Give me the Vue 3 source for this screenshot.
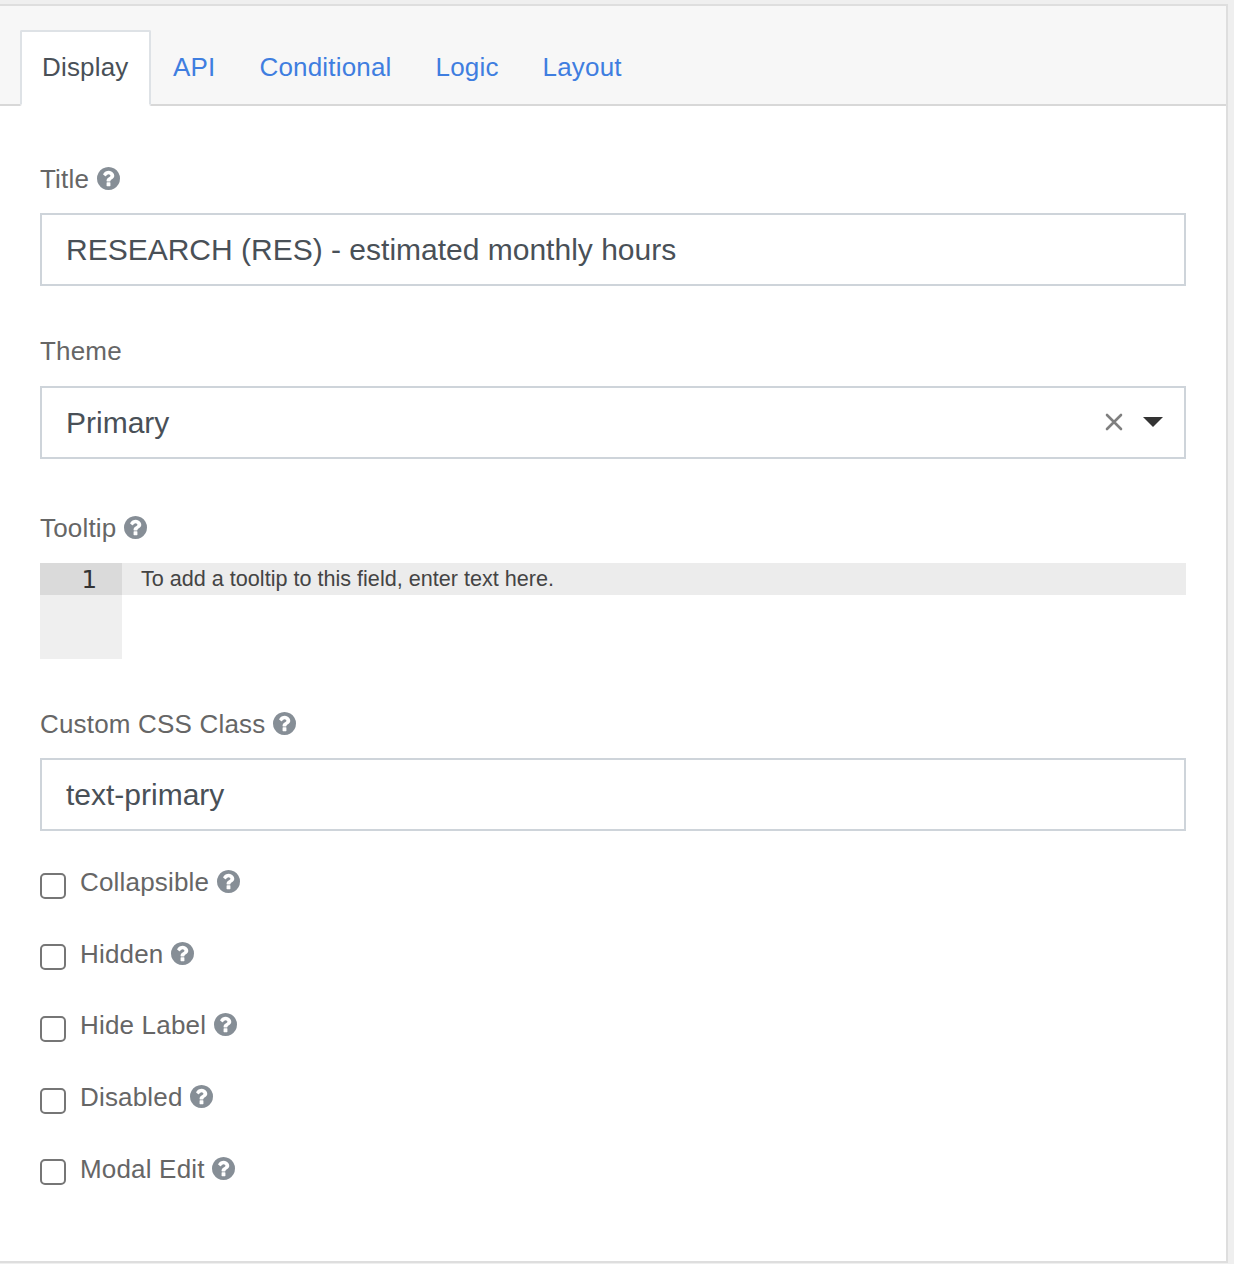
<script setup>
import { h } from 'vue'

const tabs = ['Display', 'API', 'Conditional', 'Logic', 'Layout']
const options = ['Collapsible', 'Hidden', 'Hide Label', 'Disabled', 'Modal Edit']

const HelpIcon = () =>
  h('svg', { viewBox: '0 0 1536 1536', width: 23, height: 23, style: 'display:block;margin-bottom:2px' }, [
    h('path', {
      fill: '#868e96',
      d: 'M896 1248v-192q0-14-9-23t-23-9h-192q-14 0-23 9t-9 23v192q0 14 9 23t23 9h192q14 0 23-9t9-23zm256-672q0-88-55.500-163t-138.500-116-170-41q-243 0-371 213-15 24 8 42l132 100q7 6 19 6 16 0 25-12 53-68 86-92 34-24 86-24 48 0 85.500 26t37.500 59q0 38-20 61t-68 45q-63 28-115.500 86.500t-52.500 125.500v36q0 14 9 23t23 9h192q14 0 23-9t9-23q0-19 21.500-49.500t54.500-49.500q32-18 49-28.500t46-35 44.500-48 28-60.500 12.500-81zm384 192q0 209-103 385.500t-279.500 279.500-385.500 103-385.500-103-279.500-279.500-103-385.500 103-385.500 279.500-279.500 385.500-103 385.500 103 279.500 279.500 103 385.500z'
    })
  ])
</script>

<template>
  <div class="page">
    <section class="card">
      <nav class="tabs">
        <a v-for="(t, i) in tabs" :key="t" class="tab" :class="{ active: i === 0 }">{{ t }}</a>
      </nav>
      <div class="body">
        <div class="field title">
          <div class="label"><span>Title</span><HelpIcon /></div>
          <div class="control"><span>RESEARCH (RES) - estimated monthly hours</span></div>
        </div>
        <div class="field theme">
          <div class="label"><span>Theme</span></div>
          <div class="control">
            <span>Primary</span>
            <svg class="clear" width="18" height="18" viewBox="0 0 18 18">
              <path d="M2 2L16 16M16 2L2 16" stroke="#7f7f7f" stroke-width="2.600" stroke-linecap="round" />
            </svg>
            <svg class="caret" width="20" height="10" viewBox="0 0 20 10">
              <path d="M0 0H20L10 10Z" fill="#333" />
            </svg>
          </div>
        </div>
        <div class="field tooltip">
          <div class="label"><span>Tooltip</span><HelpIcon /></div>
          <div class="editor">
            <div class="gutter"><div class="line-no">1</div></div>
            <div class="code"><span>To add a tooltip to this field, enter text here.</span></div>
          </div>
        </div>
        <div class="field css">
          <div class="label"><span>Custom CSS Class</span><HelpIcon /></div>
          <div class="control"><span>text-primary</span></div>
        </div>
        <div class="options">
          <div v-for="o in options" :key="o" class="option">
            <i class="box"></i>
            <div class="label"><span>{{ o }}</span><HelpIcon /></div>
          </div>
        </div>
      </div>
    </section>
  </div>
</template>

<style>
body { background: #efefef; }
</style>

<style scoped>
.page {
  box-sizing: border-box;
  height: 1264px;
  padding: 4px 6px 1px 0;
  overflow: hidden;
  background: #efefef;
  font-family: "Liberation Sans", Arial, sans-serif;
  font-size: 26px;
  letter-spacing: 0.18px;
}
.card {
  box-sizing: border-box;
  height: 1259px;
  border: 2px solid #dedede;
  border-left: 0;
  background: #fff;
}
.tabs {
  box-sizing: border-box;
  display: flex;
  height: 100px;
  padding: 24px 0 0 20px;
  border-bottom: 2px solid #d8d8d8;
  background: #f7f7f7;
}
.tab {
  box-sizing: border-box;
  height: 76px;
  padding: 0 20px;
  border: 2px solid transparent;
  line-height: 70px;
  color: #3f7ee0;
}
.tab.active {
  width: 131px;
  border-color: #dee2e6;
  border-bottom-color: #fff;
  border-radius: 2px;
  background: #fff;
  color: #495057;
}
.body { padding: 58px 40px 0; }
.label {
  display: flex;
  align-items: center;
  gap: 7.6px;
  height: 30px;
  color: #666;
}
.control {
  box-sizing: border-box;
  display: flex;
  align-items: center;
  height: 73px;
  margin-top: 19px;
  padding: 0 21px 0 24px;
  border: 2px solid #ced4da;
  font-size: 30px;
  letter-spacing: 0;
  color: #495057;
}
.theme { margin-top: 50px; }
.theme .control { margin-top: 20px; }
.clear { margin: 0 20px 2px auto; }
.caret { margin-bottom: 2px; }
.tooltip { margin-top: 54px; }
.editor { display: flex; height: 96px; margin-top: 20px; }
.gutter { width: 82px; background: #efefef; }
.line-no {
  box-sizing: border-box;
  height: 32px;
  padding-right: 25px;
  background: #dadada;
  font: 24.5px/33px "DejaVu Sans", sans-serif;
  letter-spacing: 0;
  text-align: right;
  color: #333;
}
.code {
  flex: 1;
  height: 32px;
  padding-left: 19px;
  background: #ececec;
  font-size: 21.6px;
  line-height: 32px;
  letter-spacing: 0;
  color: #444;
}
.css { margin-top: 50px; }
.options { margin-top: 37px; }
.option { display: flex; height: 71.7px; }
.option .label { height: 29px; }
.option .box {
  box-sizing: border-box;
  width: 26px;
  height: 26px;
  margin: 4.65px 14px 0 0;
  border: 2px solid #767676;
  border-radius: 5px;
}
</style>
